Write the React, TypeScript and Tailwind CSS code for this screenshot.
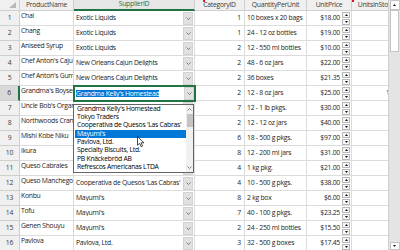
import React from "react";

type Row = {
  n: number;
  name: string;
  sup: string;
  cat: number;
  qty: string;
  price: string;
  stock: string;
};

const ROWS: Row[] = [
  { n: 1, name: "Chai", sup: "Exotic Liquids", cat: 1, qty: "10 boxes x 20 bags", price: "$18.00", stock: "39" },
  { n: 2, name: "Chang", sup: "Exotic Liquids", cat: 1, qty: "24 - 12 oz bottles", price: "$19.00", stock: "17" },
  { n: 3, name: "Aniseed Syrup", sup: "Exotic Liquids", cat: 2, qty: "12 - 550 ml bottles", price: "$10.00", stock: "13" },
  { n: 4, name: "Chef Anton's Cajun Seasoning", sup: "New Orleans Cajun Delights", cat: 2, qty: "48 - 6 oz jars", price: "$22.00", stock: "53" },
  { n: 5, name: "Chef Anton's Gumbo Mix", sup: "New Orleans Cajun Delights", cat: 2, qty: "36 boxes", price: "$21.35", stock: "0" },
  { n: 6, name: "Grandma's Boysenberry Spread", sup: "Grandma Kelly's Homestead", cat: 2, qty: "12 - 8 oz jars", price: "$25.00", stock: "120" },
  { n: 7, name: "Uncle Bob's Organic Dried Pears", sup: "Grandma Kelly's Homestead", cat: 7, qty: "12 - 1 lb pkgs.", price: "$30.00", stock: "15" },
  { n: 8, name: "Northwoods Cranberry Sauce", sup: "Grandma Kelly's Homestead", cat: 2, qty: "12 - 12 oz jars", price: "$40.00", stock: "6" },
  { n: 9, name: "Mishi Kobe Niku", sup: "Tokyo Traders", cat: 6, qty: "18 - 500 g pkgs.", price: "$97.00", stock: "29" },
  { n: 10, name: "Ikura", sup: "Tokyo Traders", cat: 8, qty: "12 - 200 ml jars", price: "$31.00", stock: "31" },
  { n: 11, name: "Queso Cabrales", sup: "Cooperativa de Quesos 'Las Cabras'", cat: 4, qty: "1 kg pkg.", price: "$21.00", stock: "22" },
  { n: 12, name: "Queso Manchego La Pastora", sup: "Cooperativa de Quesos 'Las Cabras'", cat: 4, qty: "10 - 500 g pkgs.", price: "$38.00", stock: "86" },
  { n: 13, name: "Konbu", sup: "Mayumi's", cat: 8, qty: "2 kg box", price: "$6.00", stock: "24" },
  { n: 14, name: "Tofu", sup: "Mayumi's", cat: 7, qty: "40 - 100 g pkgs.", price: "$23.25", stock: "35" },
  { n: 15, name: "Genen Shouyu", sup: "Mayumi's", cat: 2, qty: "24 - 250 ml bottles", price: "$15.50", stock: "39" },
  { n: 16, name: "Pavlova", sup: "Pavlova, Ltd.", cat: 3, qty: "32 - 500 g boxes", price: "$17.45", stock: "29" },
];

const SUPPLIERS = [
  "Grandma Kelly's Homestead",
  "Tokyo Traders",
  "Cooperativa de Quesos 'Las Cabras'",
  "Mayumi's",
  "Pavlova, Ltd.",
  "Specialty Biscuits, Ltd.",
  "PB Knäckebröd AB",
  "Refrescos Americanas LTDA",
];

const Chevron = ({ up = false }: { up?: boolean }) => (
  <svg width="5" height="3" viewBox="0 0 5 3">
    <path
      d={up ? "M0.5 2.5 L2.5 0.5 L4.5 2.5" : "M0.5 0.5 L2.5 2.5 L4.5 0.5"}
      fill="none"
      stroke="#666"
      strokeWidth="0.8"
    />
  </svg>
);

const Tri = ({ up = false }: { up?: boolean }) => (
  <svg width="3" height="2" viewBox="0 0 3 2">
    <path d={up ? "M0 2 L1.5 0 L3 2Z" : "M0 0 L1.5 2 L3 0Z"} fill="#111" />
  </svg>
);

const Spin = () => (
  <div className="flex flex-col gap-[1px] w-[8px] mr-[1px]">
    <div className="h-[6px] bg-[#f7f7f7] border border-[#b8b8b8] flex items-center justify-center">
      <Tri up />
    </div>
    <div className="h-[6px] bg-[#f7f7f7] border border-[#b8b8b8] flex items-center justify-center">
      <Tri />
    </div>
  </div>
);

const DropBtn = () => (
  <div className="w-[10px] h-[13px] mr-[1px] shrink-0 bg-[#e1e1e1] border border-[#d2d2d2] flex items-center justify-center">
    <Chevron />
  </div>
);

const Cursor = () => (
  <svg width="8" height="12" viewBox="0 0 8 12">
    <path
      d="M0.5 0.5 L0.5 9.3 L2.6 7.3 L4.1 10.7 L5.5 10.1 L4.1 6.8 L7 6.8 Z"
      fill="#fff"
      stroke="#000"
      strokeWidth="0.7"
    />
  </svg>
);

const cell = "h-full border-r border-b border-[#dcdcdc] overflow-hidden whitespace-nowrap shrink-0";

export default function App() {
  return (
    <div className="relative flex w-[400px] h-[250px] overflow-hidden bg-white font-['Open_Sans',sans-serif] text-[6.8px] tracking-[-0.25px] leading-none text-[#1c1c1c]">
      <div className="w-[388px] h-full overflow-hidden">
        <div className="w-[400px]">
          {/* header */}
          <div className="flex h-[11px] text-[#3c3c3c]">
            <div className="w-[20px] h-full bg-[#f0f0f0] border-r border-b border-[#cfcfcf] flex items-end justify-end pr-[3px] pb-[2px]">
              <svg width="7" height="6" viewBox="0 0 7 6">
                <path d="M7 0 L7 6 L0 6 Z" fill="#b9b9b9" />
              </svg>
            </div>
            <div className="w-[54px] h-full bg-[#f0f0f0] border-r border-b border-[#cfcfcf] flex items-center justify-center">
              ProductName
            </div>
            <div className="w-[121px] h-full bg-[#e6e6e6] border-r border-b-2 border-r-[#cfcfcf] border-b-[#217346] flex items-center justify-center text-[#217346]">
              SupplierID
            </div>
            <div className="relative w-[50px] h-full bg-[#f0f0f0] border-r border-b border-[#cfcfcf] flex items-center justify-center">
              <div className="absolute left-[8px] top-0 w-[2px] h-[2px] bg-[#e81123]" />
              CategoryID
            </div>
            <div className="w-[62px] h-full bg-[#f0f0f0] border-r border-b border-[#cfcfcf] flex items-center justify-center overflow-hidden whitespace-nowrap">
              QuantityPerUnit
            </div>
            <div className="w-[45px] h-full bg-[#f0f0f0] border-r border-b border-[#cfcfcf] flex items-center justify-center">
              UnitPrice
            </div>
            <div className="relative w-[48px] h-full bg-[#f0f0f0] border-b border-[#cfcfcf] flex items-center justify-center overflow-hidden whitespace-nowrap">
              <div className="absolute left-0 top-0 w-[2px] h-[2px] bg-[#e81123]" />
              UnitsInStock
            </div>
          </div>

          {ROWS.map((r) => {
            const active = r.n === 6;
            return (
              <div key={r.n} className="flex h-[15px]">
                <div
                  className={`w-[20px] h-full border-b border-[#cfcfcf] flex items-center justify-center text-[#3c3c3c] ${
                    active ? "bg-[#d8d8d8] border-r-2 border-r-[#217346]" : "bg-[#f0f0f0] border-r"
                  }`}
                >
                  {r.n}
                </div>
                <div className={`${cell} w-[54px] pl-[1px] pt-[2px]`}>{r.name}</div>
                {active ? (
                  <div className="relative z-10 w-[121px] h-full shrink-0 bg-white outline-2 outline-[#217346] -outline-offset-1 flex items-center pl-[2px]">
                    <div className="flex-1 overflow-hidden whitespace-nowrap">
                      <span className="bg-[#0078d7] text-white py-[1.5px]">{r.sup}</span>
                    </div>
                    <DropBtn />
                  </div>
                ) : (
                  <div className={`${cell} w-[121px] flex items-center pl-[2px]`}>
                    <div className="flex-1 overflow-hidden whitespace-nowrap">{r.sup}</div>
                    <DropBtn />
                  </div>
                )}
                <div className={`${cell} w-[50px] flex items-center justify-end pr-[3px]`}>{r.cat}</div>
                <div className={`${cell} w-[62px] flex items-center pl-[2px]`}>{r.qty}</div>
                <div className={`${cell} w-[45px] flex items-center justify-end gap-[2px]`}>
                  <span>{r.price}</span>
                  <Spin />
                </div>
                <div className={`${cell} w-[48px] flex items-center justify-end pr-[2px]`}>{r.stock}</div>
              </div>
            );
          })}
        </div>
      </div>

      {/* vertical scrollbar */}
      <div className="w-[12px] h-full bg-[#e4e4e4] border-l border-[#cfcfcf] flex flex-col items-center">
        <div className="w-[10px] h-[10px] bg-white border border-[#c4c4c4] flex items-center justify-center">
          <Tri up />
        </div>
        <div className="w-[9px] h-[42px] bg-white border border-[#c4c4c4]" />
        <div className="flex-1" />
        <div className="w-[10px] h-[8px] bg-white border border-[#c4c4c4] flex items-center justify-center">
          <Tri />
        </div>
      </div>

      {/* open dropdown list */}
      <div className="absolute left-[73px] top-[104px] w-[121px] h-[69px] bg-white border border-[#646464] flex text-[#000]">
        <div className="flex-1 flex flex-col pl-[1px]">
          {SUPPLIERS.map((s) => (
            <div
              key={s}
              className={`h-[8.33px] flex items-center pl-[2px] whitespace-nowrap overflow-hidden ${
                s === "Mayumi's" ? "bg-[#0078d7] text-white" : ""
              }`}
            >
              {s}
            </div>
          ))}
        </div>
        <div className="w-[7px] h-full bg-[#f0f0f0] flex flex-col items-center">
          <div className="h-[9px] flex items-center">
            <Chevron up />
          </div>
          <div className="w-[6px] h-[13px] bg-[#c4c4c4]" />
          <div className="flex-1" />
          <div className="h-[9px] flex items-center">
            <Chevron />
          </div>
        </div>
      </div>

      <div className="absolute left-[137px] top-[136px]">
        <Cursor />
      </div>
    </div>
  );
}
